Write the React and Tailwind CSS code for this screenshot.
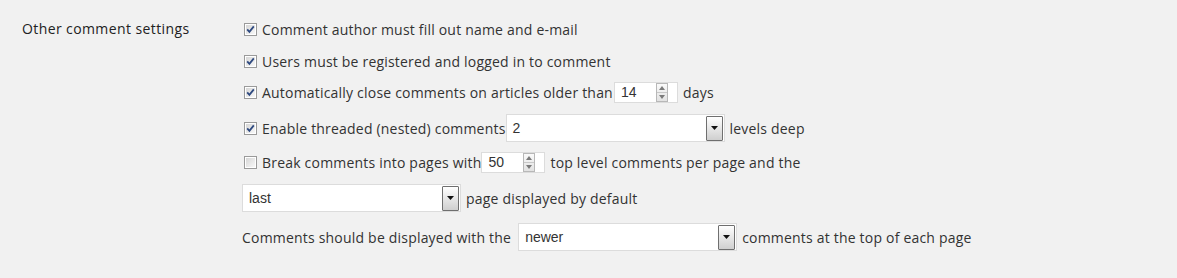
import React from "react";

function Check({ checked }) {
  return (
    <svg width="13" height="13" viewBox="0 0 13 13" className="shrink-0">
      <defs>
        <linearGradient id={checked ? "cbg1" : "cbg0"} x1="0" y1="0" x2="1" y2="1">
          <stop offset="0" stopColor="#d6d6d6" />
          <stop offset="1" stopColor="#f8f8f8" />
        </linearGradient>
      </defs>
      <rect x="0.5" y="0.5" width="12" height="12" fill="#fff" stroke="#9a9a9a" />
      <rect x="2" y="2" width="9" height="9" fill={`url(#${checked ? "cbg1" : "cbg0"})`} />
      {checked && (
        <path d="M3.2 6.4 L5.4 8.8 L9.8 3.4" fill="none" stroke="#2f4a80" strokeWidth="1.8" />
      )}
    </svg>
  );
}

function Spinner() {
  return (
    <div className="flex flex-col w-[12px] h-[19px] border border-[#b8b8b8] bg-gradient-to-b from-[#fafafa] to-[#e2e2e2]">
      <div className="flex-1 flex items-center justify-center border-b border-[#c8c8c8]">
        <svg width="6" height="4" viewBox="0 0 6 4"><path d="M0 4 L3 0 L6 4 Z" fill="#7a7a7a" /></svg>
      </div>
      <div className="flex-1 flex items-center justify-center">
        <svg width="6" height="4" viewBox="0 0 6 4"><path d="M0 0 L3 4 L6 0 Z" fill="#7a7a7a" /></svg>
      </div>
    </div>
  );
}

function NumInput({ value, className = "" }) {
  return (
    <div className={`mr-[5px] w-[64px] h-[21px] bg-white border border-[#dcdcdc] flex items-center pl-[6px] pr-[9px] text-[14px] tracking-normal text-[#333] [font-family:'Liberation_Sans',Arial,sans-serif] ${className}`}>
      <span className="flex-1">{value}</span>
      <Spinner />
    </div>
  );
}

function Select({ value, className = "" }) {
  return (
    <div className={`w-[219px] h-[28px] bg-white border border-[#dcdcdc] flex items-center pl-[6px] pr-[1px] text-[14px] tracking-normal text-[#333] [font-family:'Liberation_Sans',Arial,sans-serif] ${className}`}>
      <span className="flex-1">{value}</span>
      <div className="w-[17px] h-[25px] border border-[#6f6f6f] rounded-[1px] bg-gradient-to-b from-[#ffffff] to-[#cfcfcf] flex items-center justify-center">
        <svg width="7" height="4" viewBox="0 0 7 4"><path d="M0 0 L7 0 L3.5 4 Z" fill="#111" /></svg>
      </div>
    </div>
  );
}

export default function App() {
  return (
    <div className="w-[1177px] h-[278px] bg-[#f1f1f1] flex [font-family:'Open_Sans',sans-serif] text-[14px] text-[#333] tracking-[0.2px]">
      <div className="w-[242px] pl-[22px] pt-[19px] text-[#222] leading-[20px] tracking-[0.4px]">Other comment settings</div>
      <div className="flex flex-col pt-[13px]">
        <div className="h-[32px] flex items-center pl-[2px] gap-[5px]">
          <Check checked />
          <span>Comment author must fill out name and e-mail</span>
        </div>
        <div className="h-[32px] flex items-center pl-[2px] gap-[5px]">
          <Check checked />
          <span>Users must be registered and logged in to comment</span>
        </div>
        <div className="h-[31px] flex items-center pl-[2px]">
          <Check checked />
          <span className="ml-[5px]">Automatically close comments on articles older than</span>
          <NumInput value="14" className="ml-[1px]" />
          <span>days</span>
        </div>
        <div className="h-[40px] flex items-center pl-[2px]">
          <Check checked />
          <span className="ml-[5px]">Enable threaded (nested) comments</span>
          <Select value="2" className="mr-[5px]" />
          <span>levels deep</span>
        </div>
        <div className="h-[29px] flex items-center pl-[2px]">
          <Check />
          <span className="ml-[5px]">Break comments into pages with</span>
          <NumInput value="50" />
          <span>top level comments per page and the</span>
        </div>
        <div className="h-[42px] flex items-center">
          <Select value="last" className="mr-[5px]" />
          <span>page displayed by default</span>
        </div>
        <div className="h-[36px] flex items-center">
          <span className="mr-[7px]">Comments should be displayed with the</span>
          <Select value="newer" className="mr-[5px]" />
          <span>comments at the top of each page</span>
        </div>
      </div>
    </div>
  );
}
